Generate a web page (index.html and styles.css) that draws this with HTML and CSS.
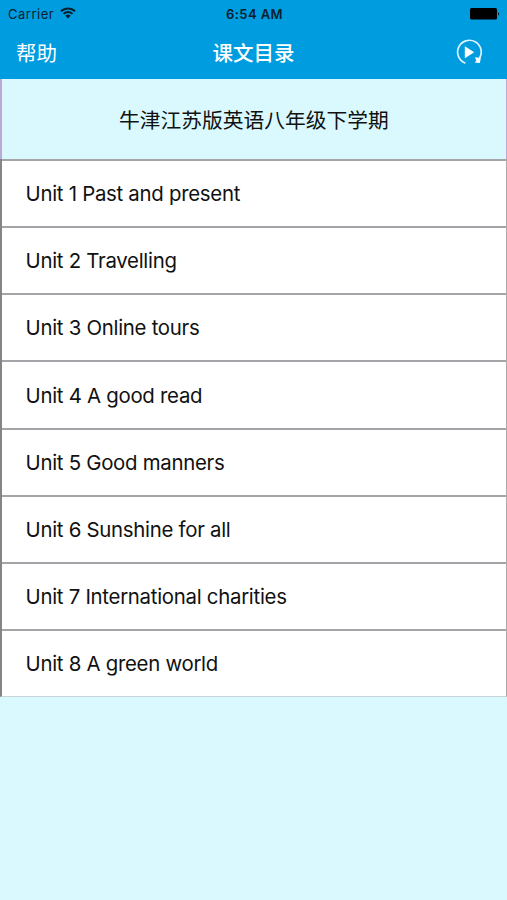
FILE: index.html
```html
<!DOCTYPE html>
<html lang="zh-CN">
<head>
<meta charset="utf-8">
<title>课文目录</title>
<link rel="stylesheet" href="styles.css">
</head>
<body>
<header class="header">
  <div class="status">
    <div class="carrier"><span>Carrier</span>
      <svg class="wifi" width="16" height="12" viewBox="0 0 16 12" fill="none" stroke="#06202e" stroke-width="1.9"><path d="M1 4.3a10 10 0 0 1 14 0M3.5 6.9a6.4 6.4 0 0 1 9 0"/><path d="M5.4 8.8a3.7 3.7 0 0 1 5.2 0L8 11.4z" fill="#06202e" stroke="none"/></svg>
    </div>
    <div class="time">6:54 AM</div>
    <svg class="battery" width="30" height="12" viewBox="0 0 30 12"><rect width="27" height="11.5" rx="1.5"/><path d="M28 4q2 1.8 0 3.6z"/></svg>
  </div>
  <nav class="nav">
    <a class="help">帮助</a>
    <h1 class="title">课文目录</h1>
    <svg class="play" width="28" height="28" viewBox="0 0 28 28"><path d="M10.4 25.2A11.8 11.8 0 1 1 24.2 20.7" fill="none" stroke="#dcf4ff" stroke-width="1.7"/><path d="M9.8 8.3v12l9.4-6z" fill="#fff"/><path d="M20 19.3l5.8.6-.9 5-5.2-.4 1.6-1.7z" fill="#fff"/></svg>
  </nav>
</header>
<main>
  <h2 class="book">牛津江苏版英语八年级下学期</h2>
  <ul class="units">
    <li><span>Unit 1 Past and present</span></li>
    <li><span>Unit 2 Travelling</span></li>
    <li><span>Unit 3 Online tours</span></li>
    <li><span>Unit 4 A good read</span></li>
    <li><span>Unit 5 Good manners</span></li>
    <li><span>Unit 6 Sunshine for all</span></li>
    <li><span>Unit 7 International charities</span></li>
    <li><span>Unit 8 A green world</span></li>
  </ul>
</main>
</body>
</html>
```
FILE: styles.css
```css
* { box-sizing: border-box; }
body {
  margin: 0;
  min-height: 900px;
  background: #d9f9ff;
  color: #111;
  font-family: Inter, "Noto Sans CJK SC", sans-serif;
}
.header { height: 79px; background: #009ce0; }
.status, .nav {
  display: grid;
  grid-template-columns: 1fr auto 1fr;
  align-items: center;
}
.status { height: 27px; padding: 0 7px 0 8px; color: #06202e; font-size: 13px; }
.carrier { display: flex; align-items: center; gap: 6px; letter-spacing: 0.6px; }
.carrier span { letter-spacing: 0.5px; }
.wifi { margin-top: -2px; }
.time { padding-left: 1px; font-weight: 600; letter-spacing: 0.4px; }
.battery { justify-self: end; fill: #000; }
.nav { height: 50px; padding: 0 24px 0 16px; color: #fff; }
.help { font-size: 20.5px; }
.title { margin: 0 0 0 8px; font-size: 20.5px; font-weight: 500; }
.play { justify-self: end; }
.book {
  display: flex;
  align-items: center;
  justify-content: center;
  height: 80px;
  margin: 0;
  border: solid #bba9d6;
  border-width: 0 1px 0 2px;
  font-size: 20.75px;
  font-weight: 400;
}
.units {
  display: grid;
  grid-template-rows: repeat(8, 1fr);
  height: 538px;
  margin: 0;
  padding: 0;
  list-style: none;
  background: #fff;
  border-left: 2px solid #858585;
  border-right: 1px solid #aaa;
  border-bottom: 1px solid #c9d5d9;
}
.units li {
  display: flex;
  align-items: center;
  padding: 0.3px 0 0 23.5px;
  border-top: 2px solid #a5a5a9;
  font-size: 20.4px;
  letter-spacing: -0.28px;
}
```
